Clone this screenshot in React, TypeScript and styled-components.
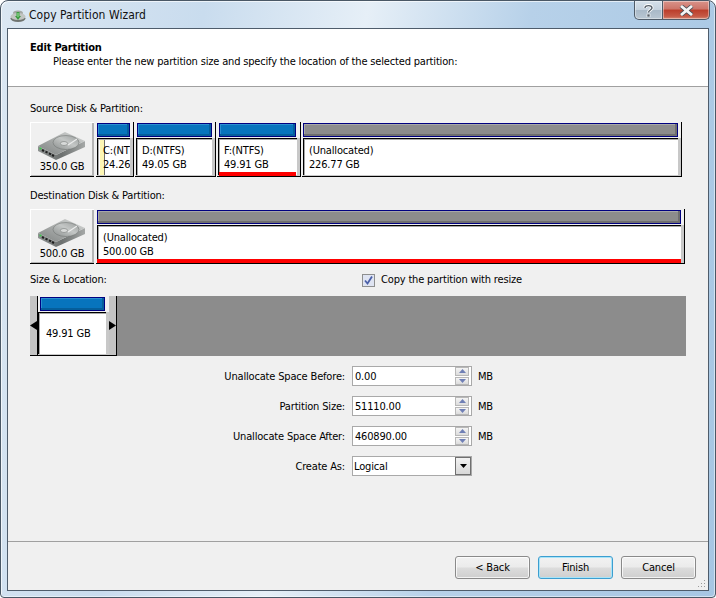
import React from "react";
import styled, { createGlobalStyle } from "styled-components";

const Global = createGlobalStyle`
  html, body { margin: 0; padding: 0; background: #fff; }
  body { font-family: "DejaVu Sans Condensed", "DejaVu Sans", sans-serif; font-size: 11px; letter-spacing: -0.17px; color: #000; }
  * { box-sizing: border-box; }
`;

const Win = styled.div`
  width: 716px;
  height: 598px;
  border: 1px solid #4a5866;
  border-radius: 8px 8px 4px 4px;
  background: linear-gradient(100deg, #dbe7f2 0%, #c9dcee 25%, #e6eff7 45%, #b7d1e9 65%, #a6c6e3 100%);
  box-shadow: inset 1px 1px 0 rgba(255,255,255,.65), inset -1px -1px 0 rgba(255,255,255,.5);
  padding: 0 6px 6px;
  display: flex;
  flex-direction: column;
`;
const TitleBar = styled.div`
  height: 27px;
  flex: none;
  display: flex;
  align-items: flex-start;
`;
const AppIcon = styled.svg`
  width: 16px;
  height: 16px;
  margin: 7px 3px 0 3px;
  flex: none;
`;
const Caption = styled.div`
  font-size: 12px;
  line-height: 16px;
  letter-spacing: 0.05px;
  margin-top: 6px;
  color: #111;
`;
const Caps = styled.div`
  margin-left: auto;
  margin-right: -1px;
  display: flex;
  height: 19px;
`;
const Cap = styled.div<{ $w: number; $red?: boolean }>`
  width: ${(p) => p.$w}px;
  height: 19px;
  display: flex;
  align-items: center;
  justify-content: center;
  border: 1px solid #4f5b68;
  border-top: none;
  border-left: ${(p) => (p.$red ? "none" : "1px solid #4f5b68")};
  border-radius: ${(p) => (p.$red ? "0 0 5px 0" : "0 0 0 5px")};
  background: ${(p) =>
    p.$red
      ? "linear-gradient(#d9938a 0%, #cd7468 45%, #bb3d2a 50%, #c65a46 85%, #d68a75 100%)"
      : "linear-gradient(#d5e0ea 0%, #c5d2de 48%, #a9b9c8 52%, #b9c6d2 100%)"};
  box-shadow: inset 0 0 0 1px rgba(255,255,255,.4);
`;
const Client = styled.div`
  flex: 1;
  position: relative;
  display: flex;
  flex-direction: column;
  border: 1px solid #4e5c6b;
  background: #f0f0f0;
  min-height: 0;
`;
const Header = styled.div`
  height: 58px;
  flex: none;
  background: #fff;
  border-bottom: 1px solid #a0a0a0;
  padding: 12px 0 0 22px;
  line-height: 14px;
`;
const Title = styled.div`
  font-weight: bold;
`;
const Sub = styled.div`
  padding-left: 23px;
`;
const Body = styled.div`
  flex: 1;
  padding: 14px 0 0 22px;
`;
const Label = styled.div<{ $top: number }>`
  line-height: 16px;
  margin-top: ${(p) => p.$top}px;
`;
const Strip = styled.div<{ $top: number }>`
  display: flex;
  height: 55px;
  margin-top: ${(p) => p.$top}px;
`;
const DiskTile = styled.div`
  width: 64px;
  flex: none;
  margin-right: 2px;
  background: #f0f0f0;
  border-bottom: 1px solid #000;
  box-shadow: inset 1px 1px 0 #fff, inset -2px -1px 0 #b4b4b4;
  display: flex;
  flex-direction: column;
  align-items: center;
  padding-top: 10px;
`;
const DiskIcon = styled.svg`
  width: 50px;
  height: 28px;
  flex: none;
`;
const DiskSize = styled.div`
  line-height: 13px;
`;
const Cell = styled.div<{ $w: number }>`
  width: ${(p) => p.$w}px;
  flex: none;
  margin-right: 1px;
  border-right: 1px solid #000;
  border-bottom: 1px solid #000;
  padding: 1px 0 0 1px;
  display: flex;
  flex-direction: column;
  background: #f0f0f0;
`;
const Bar = styled.div<{ $gray?: boolean; $left?: number; $right: number }>`
  height: 14px;
  flex: none;
  margin-left: ${(p) => p.$left ?? 0}px;
  margin-right: ${(p) => p.$right}px;
  border: 1px solid #000080;
  background: ${(p) => (p.$gray ? "#8c8c8c" : "#0774bd")};
  box-shadow: inset -2px -2px 0 ${(p) => (p.$gray ? "#6e6e6e" : "#055e9b")}, inset 1px 1px 0 ${(p) => (p.$gray ? "#a8a8a8" : "#2c8fd0")};
`;
const Inner = styled.div`
  flex: 1;
  margin-top: 1px;
  min-height: 0;
  overflow: hidden;
  background: #fff;
  box-shadow: inset -3px -1px 0 #c8c8c8, inset 1px 1px 0 #000, inset 2px 2px 0 #a8a8a8;
  padding: 6px 3px 0 6px;
  display: flex;
  flex-direction: column;
  line-height: 14px;
  white-space: nowrap;
  position: relative;
`;
const UsedMark = styled.div`
  position: absolute;
  left: 3px;
  top: 2px;
  bottom: 1px;
  width: 5px;
  background: #fdf6b4;
  border-right: 1px solid #6e6e6e;
`;
const CellText = styled.div`
  position: relative;
  overflow: hidden;
`;
const RedLine = styled.div<{ $left: number; $right: number }>`
  height: 4px;
  margin: auto ${(p) => p.$right}px 0 ${(p) => p.$left}px;
  background: #f00;
  flex: none;
`;
const LabelRow = styled.div`
  display: flex;
  margin-top: 8px;
  line-height: 16px;
`;
const LabelCell = styled.div`
  width: 332px;
`;
const CheckWrap = styled.div`
  display: flex;
  align-items: center;
  gap: 6px;
`;
const Check = styled.svg`
  width: 13px;
  height: 13px;
  flex: none;
`;
const Track = styled.div`
  width: 656px;
  height: 60px;
  margin-top: 8px;
  background: #8c8c8c;
  display: flex;
`;
const Handle = styled.div<{ $right?: boolean }>`
  width: 8px;
  flex: none;
  background: #c4c4c4;
  border-bottom: 1px solid #000;
  border-right: 1px solid #000;
  display: flex;
  align-items: center;
  justify-content: ${(p) => (p.$right ? "flex-start" : "flex-end")};
`;
const Arrow = styled.svg`
  width: 7px;
  height: 9px;
  flex: none;
`;
const SizeBlock = styled.div`
  width: 71px;
  flex: none;
  padding-top: 1px;
  background: #f0f0f0;
  display: flex;
  flex-direction: column;
  border-bottom: 1px solid #000;
`;
const SizeInner = styled(Inner)`
  padding: 15px 0 0 8px;
`;
const Form = styled.div`
  display: grid;
  grid-template-columns: 315px 120px auto;
  grid-auto-rows: 20px;
  column-gap: 7px;
  row-gap: 10px;
  margin-top: 10px;
  align-items: center;
`;
const FormLabel = styled.div`
  text-align: right;
`;
const Field = styled.div`
  height: 20px;
  background: #fff;
  border: 1px solid #a9a9a9;
  display: flex;
  align-items: center;
  justify-content: space-between;
  padding: 0 1px 0 2px;
`;
const SelectField = styled(Field)`
  padding: 0 0 0 1px;
`;
const Unit = styled.div`
  margin-left: -1px;
`;
const Spin = styled.div`
  width: 14px;
  height: 18px;
  flex: none;
  display: flex;
  flex-direction: column;
  gap: 1px;
  margin-right: 1px;
`;
const SpinBtn = styled.div`
  flex: 1;
  background: linear-gradient(#f4f4f4, #dcdcdc);
  border: 1px solid #b8b8b8;
  display: flex;
  align-items: center;
  justify-content: center;
`;
const Tri = styled.svg`
  width: 7px;
  height: 4px;
  flex: none;
`;
const DropBtn = styled.div`
  width: 16px;
  height: 18px;
  flex: none;
  border: 1px solid #707070;
  background: linear-gradient(#f2f2f2, #d8d8d8);
  display: flex;
  align-items: center;
  justify-content: center;
`;
const Footer = styled.div`
  height: 49px;
  flex: none;
  border-top: 1px solid #a0a0a0;
  padding: 14px 12px 0 0;
  display: flex;
  justify-content: flex-end;
  gap: 8px;
`;
const Btn = styled.div<{ $focus?: boolean }>`
  width: 75px;
  height: 23px;
  border: 1px solid ${(p) => (p.$focus ? "#3c9ed0" : "#8a8a8a")};
  border-radius: 3px;
  background: linear-gradient(#f2f2f2 0%, #ebebeb 48%, #dcdcdc 52%, #cfcfcf 100%);
  box-shadow: inset 0 0 0 1px ${(p) => (p.$focus ? "#a8e4f8" : "rgba(255,255,255,.75)")};
  display: flex;
  align-items: center;
  justify-content: center;
`;
const Grip = styled.svg`
  position: absolute;
  right: 2px;
  bottom: 2px;
  width: 9px;
  height: 9px;
`;

const Hdd = ({ id }: { id: string }) => (
  <DiskIcon viewBox="0 0 50 28">
    <defs>
      <linearGradient id={`${id}t`} x1="0" y1="1" x2="1" y2="0">
        <stop offset="0" stopColor="#7f8382" />
        <stop offset="0.5" stopColor="#a7aaa9" />
        <stop offset="1" stopColor="#dadcdb" />
      </linearGradient>
      <linearGradient id={`${id}s`} x1="0" y1="0" x2="1" y2="0">
        <stop offset="0" stopColor="#8f9392" />
        <stop offset="0.5" stopColor="#6c706f" />
        <stop offset="1" stopColor="#a5a8a7" />
      </linearGradient>
      <linearGradient id={`${id}d`} x1="0" y1="1" x2="1" y2="0">
        <stop offset="0" stopColor="#8c908f" />
        <stop offset="0.55" stopColor="#c4c7c6" />
        <stop offset="1" stopColor="#9a9e9d" />
      </linearGradient>
    </defs>
    <path d="M1 14 L1 19 L19 28 L48 15 L48 9 L19 23 Z" fill={`url(#${id}s)`} />
    <path d="M1 14 L28 0 L48 9 L19 23 Z" fill={`url(#${id}t)`} />
    <ellipse cx="29" cy="10.5" rx="13" ry="7" fill={`url(#${id}d)`} stroke="#6a6e6d" strokeWidth="0.5" />
    <ellipse cx="27" cy="11.5" rx="3.6" ry="2" fill="#d8dad9" stroke="#6a6e6d" strokeWidth="0.5" />
    <path d="M40 7 L31 13" stroke="#eceded" strokeWidth="1.2" />
    <path d="M5 18 L7 19 M8.5 19.7 L10.5 20.7 M12 21.4 L14 22.4 M15 23 L17 24" stroke="#1f1f1f" strokeWidth="2" />
    <rect x="2.5" y="15.6" width="2" height="1.8" fill="#38c748" />
  </DiskIcon>
);

const TriUp = ({ down }: { down?: boolean }) => (
  <Tri viewBox="0 0 7 4">
    <path d={down ? "M0 0 H7 L3.5 4 Z" : "M0 4 H7 L3.5 0 Z"} fill="#6f7fb5" />
  </Tri>
);

const Spinner = () => (
  <Spin>
    <SpinBtn><TriUp /></SpinBtn>
    <SpinBtn><TriUp down /></SpinBtn>
  </Spin>
);

const rows = [
  ["Unallocate Space Before:", "0.00"],
  ["Partition Size:", "51110.00"],
  ["Unallocate Space After:", "460890.00"],
];

export default function App() {
  return (
    <Win>
      <Global />
      <TitleBar>
        <AppIcon viewBox="0 0 16 16">
          <ellipse cx="8" cy="5" rx="5" ry="2.5" fill="#a4a8a4" />
          <ellipse cx="8" cy="10.5" rx="7.5" ry="3.5" fill="#6f7470" />
          <ellipse cx="8" cy="8.5" rx="7.5" ry="3.5" fill="#c2c5c2" />
          <path d="M6.5 4 H9.5 V8 H11 L8 12 L5 8 H6.5 Z" fill="#3c9a40" />
          <path d="M7 5 H9 V9 H7 Z" fill="#6cc26e" />
        </AppIcon>
        <Caption>Copy Partition Wizard</Caption>
        <Caps>
          <Cap $w={29}>
            <svg width="11" height="13" viewBox="0 0 11 13">
              <path d="M2 4 C2 0.8 9 0.8 9 4 C9 6 5.5 6 5.5 8.5" fill="none" stroke="#fff" strokeWidth="3" />
              <path d="M2 4 C2 0.8 9 0.8 9 4 C9 6 5.5 6 5.5 8.5" fill="none" stroke="#56606a" strokeWidth="1.4" />
              <rect x="4" y="10" width="3" height="3" fill="#56606a" stroke="#fff" strokeWidth="0.6" />
            </svg>
          </Cap>
          <Cap $w={47} $red>
            <svg width="15" height="11" viewBox="0 0 15 11">
              <path d="M2 1 L13 10 M13 1 L2 10" stroke="#4a4f56" strokeWidth="4.4" />
              <path d="M2 1 L13 10 M13 1 L2 10" stroke="#f4f4f4" strokeWidth="2.8" />
            </svg>
          </Cap>
        </Caps>
      </TitleBar>
      <Client>
        <Header>
          <Title>Edit Partition</Title>
          <Sub>Please enter the new partition size and specify the location of the selected partition:</Sub>
        </Header>
        <Body>
          <Label $top={0}>Source Disk &amp; Partition:</Label>
          <Strip $top={5}>
            <DiskTile><Hdd id="a" /><DiskSize>350.0 GB</DiskSize></DiskTile>
            <Cell $w={38}>
              <Bar $right={3} />
              <Inner>
                <UsedMark />
                <CellText>C:(NTFS)</CellText>
                <CellText>24.26 GB</CellText>
              </Inner>
            </Cell>
            <Cell $w={81}>
              <Bar $left={1} $right={3} />
              <Inner>
                <CellText>D:(NTFS)</CellText>
                <CellText>49.05 GB</CellText>
              </Inner>
            </Cell>
            <Cell $w={84}>
              <Bar $left={1} $right={4} />
              <Inner>
                <CellText>F:(NTFS)</CellText>
                <CellText>49.91 GB</CellText>
                <RedLine $left={-5} $right={1} />
              </Inner>
            </Cell>
            <Cell $w={380}>
              <Bar $gray $right={3} />
              <Inner>
                <CellText>(Unallocated)</CellText>
                <CellText>226.77 GB</CellText>
              </Inner>
            </Cell>
          </Strip>
          <Label $top={11}>Destination Disk &amp; Partition:</Label>
          <Strip $top={5}>
            <DiskTile><Hdd id="b" /><DiskSize>500.0 GB</DiskSize></DiskTile>
            <Cell $w={589}>
              <Bar $gray $right={3} />
              <Inner>
                <CellText>(Unallocated)</CellText>
                <CellText>500.00 GB</CellText>
                <RedLine $left={-6} $right={0} />
              </Inner>
            </Cell>
          </Strip>
          <LabelRow>
            <LabelCell>Size &amp; Location:</LabelCell>
            <CheckWrap>
              <Check viewBox="0 0 13 13">
                <rect x="0.5" y="0.5" width="12" height="12" fill="#dfe4f2" stroke="#8e8f8f" />
                <path d="M3 6.5 L5.5 9.5 L10 2.5" fill="none" stroke="#4a5fa8" strokeWidth="1.8" />
              </Check>
              Copy the partition with resize
            </CheckWrap>
          </LabelRow>
          <Track>
            <Handle>
              <Arrow viewBox="0 0 7 9"><path d="M0 4.5 L7 0 V9 Z" fill="#000" /></Arrow>
            </Handle>
            <SizeBlock>
              <Bar $left={2} $right={4} />
              <SizeInner><CellText>49.91 GB</CellText></SizeInner>
            </SizeBlock>
            <Handle $right>
              <Arrow viewBox="0 0 7 9"><path d="M7 4.5 L0 0 V9 Z" fill="#000" /></Arrow>
            </Handle>
          </Track>
          <Form>
            {rows.map(([l, v]) => (
              <React.Fragment key={l}>
                <FormLabel>{l}</FormLabel>
                <Field>{v}<Spinner /></Field>
                <Unit>MB</Unit>
              </React.Fragment>
            ))}
            <FormLabel>Create As:</FormLabel>
            <SelectField>
              Logical
              <DropBtn>
                <Tri viewBox="0 0 7 4"><path d="M0 0 H7 L3.5 4 Z" fill="#000" /></Tri>
              </DropBtn>
            </SelectField>
          </Form>
        </Body>
        <Footer>
          <Btn>&lt; Back</Btn>
          <Btn $focus>Finish</Btn>
          <Btn>Cancel</Btn>
        </Footer>
        <Grip viewBox="0 0 9 9">
          <path d="M7 1h1v1H7zM7 4h1v1H7zM4 4h1v1H4zM7 7h1v1H7zM4 7h1v1H4zM1 7h1v1H1z" fill="#9a9a9a" />
        </Grip>
      </Client>
    </Win>
  );
}
